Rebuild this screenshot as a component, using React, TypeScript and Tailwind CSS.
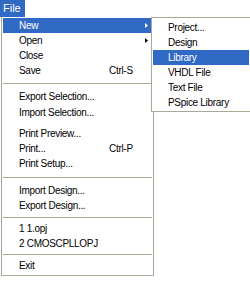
import React from "react";

type Row =
  | { kind: "item"; label: string; h: number; shortcut?: string; arrow?: boolean; active?: boolean }
  | { kind: "sep"; top: number; bottom: number }
  | { kind: "gap"; h: number };

const rows: Row[] = [
  { kind: "item", label: "New", h: 15, arrow: true, active: true },
  { kind: "item", label: "Open", h: 15, arrow: true },
  { kind: "item", label: "Close", h: 15 },
  { kind: "item", label: "Save", h: 15, shortcut: "Ctrl-S" },
  { kind: "sep", top: 5, bottom: 4 },
  { kind: "item", label: "Export Selection...", h: 16 },
  { kind: "item", label: "Import Selection...", h: 16 },
  { kind: "gap", h: 6 },
  { kind: "item", label: "Print Preview...", h: 15 },
  { kind: "item", label: "Print...", h: 15, shortcut: "Ctrl-P" },
  { kind: "item", label: "Print Setup...", h: 15 },
  { kind: "sep", top: 6, bottom: 5 },
  { kind: "item", label: "Import Design...", h: 15 },
  { kind: "item", label: "Export Design...", h: 15 },
  { kind: "sep", top: 4, bottom: 3 },
  { kind: "item", label: "1 1.opj", h: 15 },
  { kind: "item", label: "2 CMOSCPLLOPJ", h: 15 },
  { kind: "sep", top: 3, bottom: 3 },
  { kind: "item", label: "Exit", h: 15 },
];

const subItems = ["Project...", "Design", "Library", "VHDL File", "Text File", "PSpice Library"];

function Arrow({ white }: { white?: boolean }) {
  return (
    <svg width="3" height="5" viewBox="0 0 3 5" className="block">
      <polygon points="0,0 3,2.5 0,5" fill={white ? "#ffffff" : "#000000"} />
    </svg>
  );
}

export default function App() {
  return (
    <div
      className="relative w-[250px] h-[281px] overflow-hidden bg-white text-[10px] tracking-[-0.3px] text-black"
      style={{ fontFamily: '"Liberation Sans", Arial, sans-serif' }}
    >
      {/* menu bar tab */}
      <div className="flex h-[17px]">
        <div className="w-[25px] bg-[#316ac5] text-white text-[11px] tracking-normal pl-[3px] leading-[16px]">
          File
        </div>
      </div>

      {/* main dropdown */}
      <div className="ml-px w-[153px] border-x border-b border-[#aca899] px-px pt-px pb-[2px]">
        {rows.map((r, i) => {
          if (r.kind === "sep") {
            return (
              <div key={i} style={{ paddingTop: r.top, paddingBottom: r.bottom }}>
                <div className="h-px bg-[#aca899]" />
              </div>
            );
          }
          if (r.kind === "gap") return <div key={i} style={{ height: r.h }} />;
          return (
            <div
              key={i}
              className={`flex items-center pl-[16px] pr-[4px] ${r.active ? "bg-[#316ac5] text-white" : ""}`}
              style={{ height: r.h }}
            >
              <span className="w-[90px] whitespace-nowrap">{r.label}</span>
              {r.shortcut && <span className="whitespace-nowrap">{r.shortcut}</span>}
              {r.arrow && (
                <span className="ml-auto">
                  <Arrow white={r.active} />
                </span>
              )}
            </div>
          );
        })}
      </div>

      {/* New submenu */}
      <div className="absolute left-[151px] top-[17px] w-[100px] border border-[#aca899] bg-white px-px pt-[2px] pb-px">
        {subItems.map((s) => (
          <div
            key={s}
            className={`h-[15px] flex items-center pl-[15px] whitespace-nowrap ${s === "Library" ? "bg-[#316ac5] text-white" : ""}`}
          >
            {s}
          </div>
        ))}
      </div>
    </div>
  );
}
